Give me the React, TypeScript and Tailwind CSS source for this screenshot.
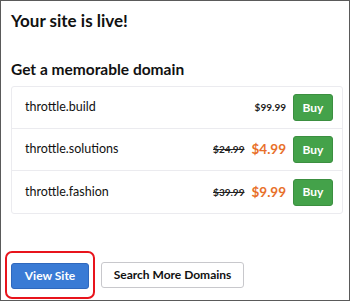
const domains = [
  { name: "throttle.build", list: "$99.99", sale: null as string | null },
  { name: "throttle.solutions", list: "$24.99", sale: "$4.99" },
  { name: "throttle.fashion", list: "$39.99", sale: "$9.99" },
];

export default function App() {
  return (
    <div className="flex h-[301px] w-[350px] flex-col border border-[#5a5a5a] bg-white pb-px pl-[10px] pr-[6px] font-['Lato',sans-serif] text-[#111]">
      <h1 className="pt-[10px] text-[17px] font-bold leading-[20px]">Your site is live!</h1>
      <h2 className="mt-[28px] text-[15.5px] font-bold leading-[20px]">Get a memorable domain</h2>
      <div className="mt-[7px] divide-y divide-[#ebebef] rounded-[3px] border border-[#ebebef]">
        {domains.map((d) => (
          <div key={d.name} className="flex h-[42px] items-center pl-[13px] pr-[9px]">
            <span className="flex-1 text-[12.5px]">{d.name}</span>
            <span
              className={
                d.sale
                  ? "text-[10px] font-bold text-[#222] line-through"
                  : "text-[10px] font-bold text-[#222]"
              }
            >
              {d.list}
            </span>
            {d.sale && (
              <span className="ml-[7px] text-[13.5px] font-bold text-[#e8702a]">{d.sale}</span>
            )}
            <button className="ml-[7px] h-[27px] w-[40px] rounded-[3px] border border-[#3b8f40] bg-[#44a24a] text-[12px] font-bold text-white">
              Buy
            </button>
          </div>
        ))}
      </div>
      <div className="mt-auto flex items-center">
        <div className="-ml-[6px] rounded-[7px] border-2 border-[#e8141c] px-[4px] pb-[8px] pt-[9px]">
          <button className="h-[26px] w-[78px] rounded-[3px] border border-[#2f68bd] bg-[#3a7bd5] text-[12px] font-bold text-white">
            View Site
          </button>
        </div>
        <button className="ml-[6px] h-[26px] w-[143px] rounded-[3px] border border-[#c8c8cc] bg-white text-[12px] font-bold text-[#111]">
          Search More Domains
        </button>
      </div>
    </div>
  );
}
